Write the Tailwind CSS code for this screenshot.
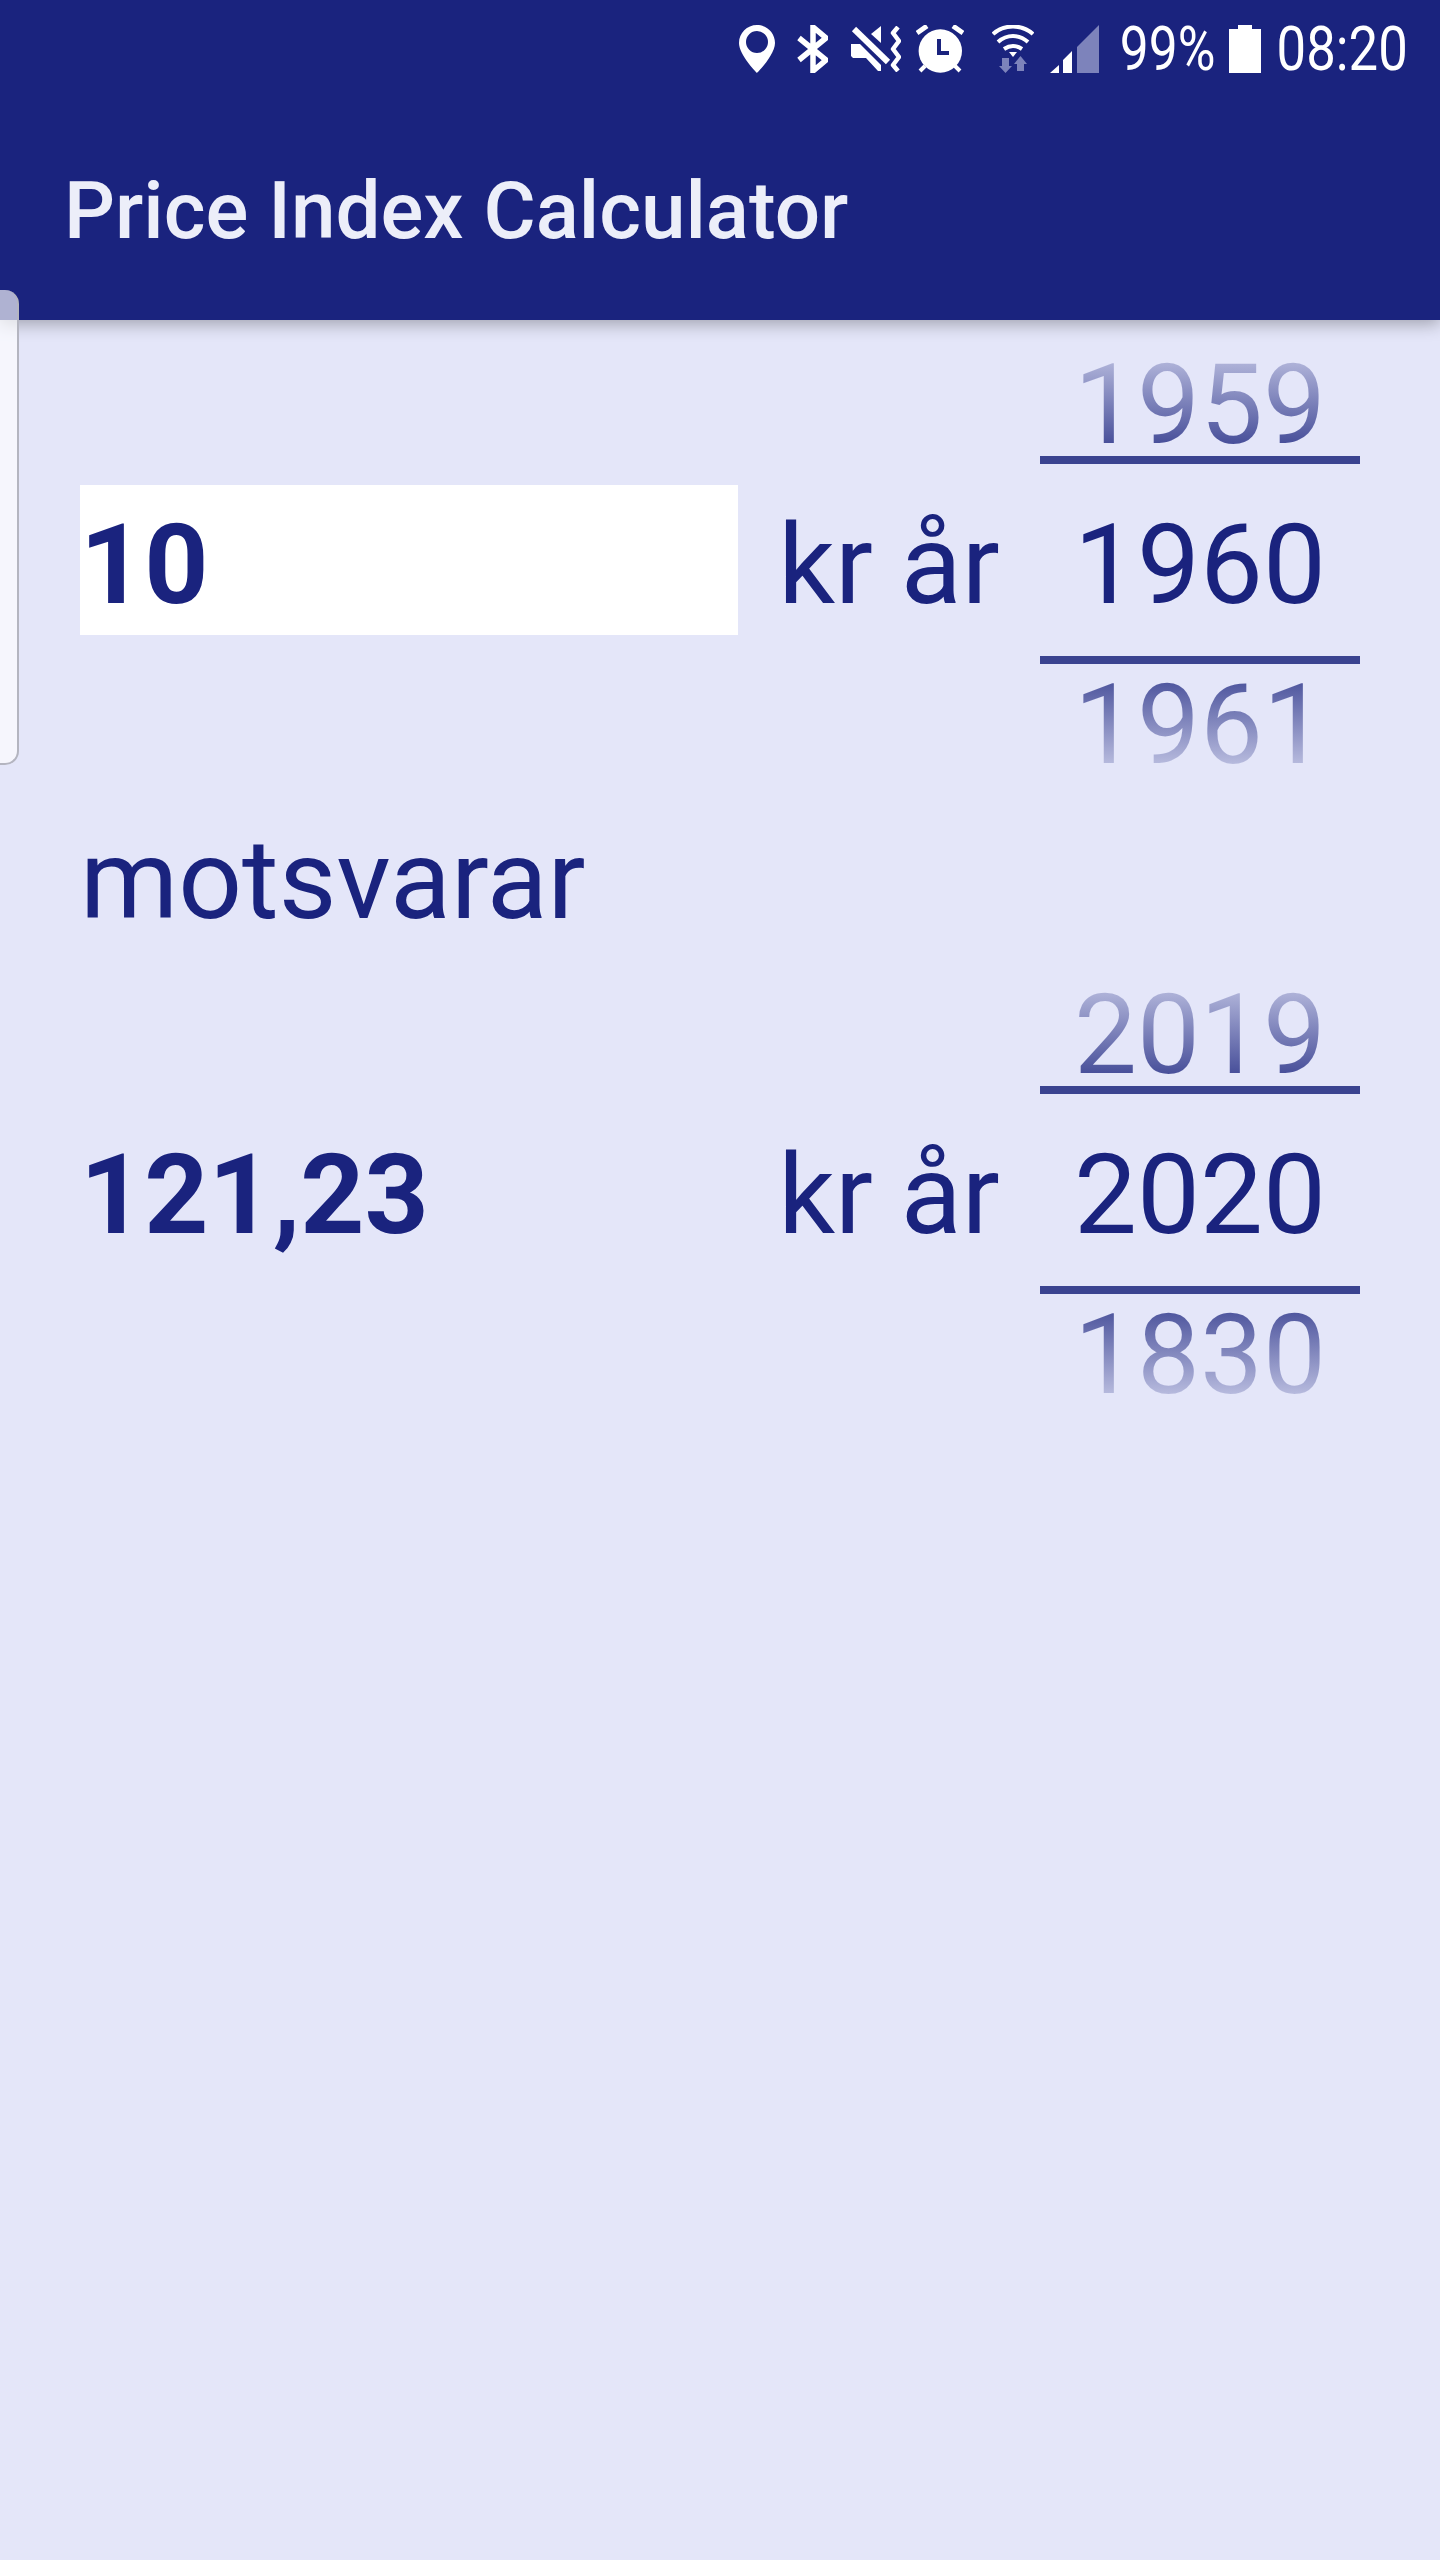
<!DOCTYPE html>
<html lang="en">
<head>
    <meta charset="UTF-8">
    <title>Price Index Calculator</title>
    <script src="https://cdn.jsdelivr.net/npm/@tailwindcss/browser@4"></script>
</head>
<body class="bg-[#e4e6f9] font-['Roboto',sans-serif] text-[#1a237e]">
<div class="relative w-[1440px] h-[2560px] overflow-hidden">

    <!-- App bar -->
    <header class="h-[320px] bg-[#1a237e] shadow-[0_4px_16px_rgba(0,0,0,0.3)] relative">
        <!-- Status bar -->
        <div class="h-[98px] flex items-center justify-end pr-[32px] text-white">
            <svg class="w-[36px] h-[48px]" viewBox="0 0 36 48" fill="#fff"><path fill-rule="evenodd" d="M18 0C8 0 0 8 0 18c0 12 18 30 18 30s18-18 18-30C36 8 28 0 18 0zm0 6a11 11 0 1 1 0 22 11 11 0 0 1 0-22z"/></svg>
            <svg class="w-[31px] h-[48px] ml-[22px]" viewBox="0 0 31 48" fill="none" stroke="#fff" stroke-width="5.5"><path d="M2 13l27 22-13 11V2l13 11L2 35"/></svg>
            <svg class="w-[50px] h-[46px] ml-[23px]" viewBox="0 0 50 46" fill="#fff"><path d="M30 0v17L20 8z"/><path d="M3 3l34 33" stroke="#fff" stroke-width="6"/><path d="M0 18h9l21 21v6h-3L15 32H2l-2-2z"/><path d="M47 1l-5 6 6 8-6 8 6 8-6 8 5 6" fill="none" stroke="#fff" stroke-width="4.5" stroke-linejoin="round"/></svg>
            <svg class="w-[48px] h-[48px] ml-[15px]" viewBox="0 0 48 48"><circle cx="24.3" cy="26" r="21.7" fill="#fff"/><path d="M23 14v14h10" fill="none" stroke="#1a237e" stroke-width="4"/><path d="M1 8l10-7M47 8L37 1" stroke="#fff" stroke-width="5"/><path d="M4 46l5-5M44 46l-5-5" stroke="#fff" stroke-width="4"/></svg>
            <svg class="w-[42px] h-[48px] ml-[28px]" viewBox="0 0 42 48"><path d="M1 9C12-1 30-1 41 9M6 17c9-8 21-8 30 0M12 24c6-4 12-4 18 0" fill="none" stroke="#fff" stroke-width="4"/><path d="M17 27h8l-4 5z" fill="#fff"/><path d="M10 33h7v8h3l-6.500 7L7 41h3z" fill="#7d83bb"/><path d="M28.500 31l6.500 8h-3v7h-7v-7h-3z" fill="#7d83bb"/></svg>
            <svg class="w-[49px] h-[48px] ml-[16px]" viewBox="0 0 49 48"><path d="M27 22L49 0v48H27z" fill="#7d83bb"/><path d="M13 35l9-9v22h-9zM0 48l9-8v8z" fill="#fff"/></svg>
            <div class="w-[93px] ml-[22px] flex justify-center"><span class="text-[62px] leading-none scale-x-[0.83] whitespace-nowrap">99%</span></div>
            <svg class="w-[32px] h-[48px] ml-[15px]" viewBox="0 0 32 48" fill="#fff"><path d="M0 4h9V0h14v4h9v44H0z"/></svg>
            <div class="w-[131px] ml-[16px] flex justify-center"><span class="text-[62px] leading-none scale-x-[0.85] whitespace-nowrap">08:20</span></div>
        </div>
        <h1 class="mt-[66px] pl-[64px] text-[80px] leading-[94px] font-medium text-[#eceef9]">Price Index Calculator</h1>
    </header>

    <!-- Edge panel handle -->
    <div class="absolute left-0 top-[290px] w-[19px] h-[475px] rounded-r-[14px] border-r-2 border-b-2 border-[#b4b5c0] bg-white/65"></div>

    <!-- From amount -->
    <section class="flex items-center pl-[80px]">
        <div class="w-[658px] h-[150px] pt-[10px] bg-white flex items-center text-[112px] font-bold leading-none">10</div>
        <div class="w-[302px] pt-[10px] text-[112px] leading-none text-center">kr år</div>
        <div class="relative w-[320px] h-[480px] text-[112px] leading-[170px] text-center">
            <div class="h-[160px] bg-linear-to-b/srgb from-[#e4e6f9] to-[#1a237e] bg-clip-text text-transparent">1959</div>
            <div class="h-[160px]">1960</div>
            <div class="h-[160px] bg-linear-to-b/srgb from-[#1a237e] to-[#e4e6f9] bg-clip-text text-transparent">1961</div>
            <div class="absolute left-0 right-0 top-[136px] h-[8px] bg-[#3a4390]"></div>
            <div class="absolute left-0 right-0 top-[336px] h-[8px] bg-[#3a4390]"></div>
        </div>
    </section>

    <p class="pl-[80px] h-[150px] text-[112px] leading-[160px]">motsvarar</p>

    <!-- To amount -->
    <section class="flex items-center pl-[80px]">
        <div class="w-[658px] h-[150px] pt-[10px] flex items-center text-[112px] font-bold leading-none">121,23</div>
        <div class="w-[302px] pt-[10px] text-[112px] leading-none text-center">kr år</div>
        <div class="relative w-[320px] h-[480px] text-[112px] leading-[170px] text-center">
            <div class="h-[160px] bg-linear-to-b/srgb from-[#e4e6f9] to-[#1a237e] bg-clip-text text-transparent">2019</div>
            <div class="h-[160px]">2020</div>
            <div class="h-[160px] bg-linear-to-b/srgb from-[#1a237e] to-[#e4e6f9] bg-clip-text text-transparent">1830</div>
            <div class="absolute left-0 right-0 top-[136px] h-[8px] bg-[#3a4390]"></div>
            <div class="absolute left-0 right-0 top-[336px] h-[8px] bg-[#3a4390]"></div>
        </div>
    </section>
</div>
</body>
</html>
